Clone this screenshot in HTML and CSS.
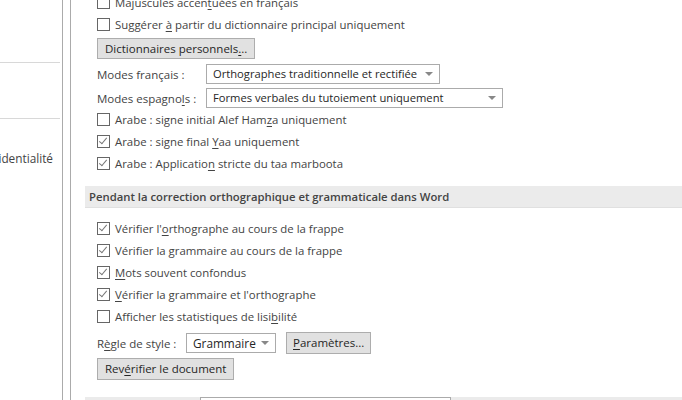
FILE: index.html
```html
<!DOCTYPE html>
<html lang="fr">
<head>
<meta charset="utf-8">
<link rel="stylesheet" href="styles.css">
</head>
<body>
<div class="window">
  <nav class="sidebar">
    <div class="nav-item"></div>
    <div class="nav-item"></div>
    <div class="nav-item last"><span class="nav-text">Centre de gestion de la confidentialité</span></div>
  </nav>
  <div class="gutter"></div>
  <main class="content">
    <div class="group top">
      <label class="row"><span class="cb"></span><span>Majuscules accen<u>t</u>uées en français</span></label>
      <label class="row"><span class="cb"></span><span>Suggérer <u>à</u> partir du dictionnaire principal uniquement</span></label>
      <button class="btn dict">Dictionnaires personnels<u>.</u>..</button>
      <div class="field fr"><span class="field-label">Modes français :</span><span class="select w-fr">Orthographes traditionnelle et rectifiée<i class="arrow"></i></span></div>
      <div class="field es"><span class="field-label">Modes espagno<u>l</u>s :</span><span class="select w-es">Formes verbales du tutoiement uniquement<i class="arrow"></i></span></div>
      <label class="row"><span class="cb"></span><span>Arabe : signe initial Alef Ham<u>z</u>a uniquement</span></label>
      <label class="row"><span class="cb on"></span><span>Arabe : signe final <u>Y</u>aa uniquement</span></label>
      <label class="row"><span class="cb on"></span><span>Arabe : Applicatio<u>n</u> stricte du taa marboota</span></label>
    </div>
    <h2 class="section">Pendant la correction orthographique et grammaticale dans Word</h2>
    <div class="group">
      <label class="row"><span class="cb on"></span><span>Vérifier l'<u>o</u>rthographe au cours de la frappe</span></label>
      <label class="row"><span class="cb on"></span><span>Vérifier la <u>g</u>rammaire au cours de la frappe</span></label>
      <label class="row"><span class="cb on"></span><span><u>M</u>ots souvent confondus</span></label>
      <label class="row"><span class="cb on"></span><span><u>V</u>érifier la grammaire et l'orthographe</span></label>
      <label class="row"><span class="cb"></span><span>Afficher les statistiques de lisi<u>b</u>ilité</span></label>
      <div class="field style"><span class="field-label">R<u>è</u>gle de style :</span><span class="select w-st">Grammaire<i class="arrow"></i></span><button class="btn params"><u>P</u>aramètres...</button></div>
      <button class="btn recheck">Rev<u>é</u>rifier le document</button>
    </div>
    <div class="section next"><span class="select w-doc"></span></div>
  </main>
</div>
</body>
</html>
```
FILE: styles.css
```css
html, body {
  margin: 0;
  padding: 0;
  background: #fff;
}
body {
  width: 682px;
  height: 400px;
  overflow: hidden;
  font-family: "Open Sans", "Noto Sans", sans-serif;
  font-size: 11.5px;
  color: #444;
}
u { text-decoration-thickness: 1px; text-underline-offset: 2px; }
.window {
  display: flex;
  height: 400px;
}
.sidebar {
  width: 62px;
  flex: none;
  border-right: 1px solid #ababab;
}
.nav-item {
  height: 55px;
  border-bottom: 1px solid #d8d8d8;
  margin-right: 2px;
}
.nav-item:first-child { height: 62px; }
.nav-item.last {
  border-bottom: none;
  display: flex;
  justify-content: flex-end;
  overflow: hidden;
  padding-top: 31px;
  padding-right: 7px;
  height: auto;
  white-space: nowrap;
  font-size: 11.8px;
}
.gutter {
  width: 7px;
  flex: none;
  border-right: 1px solid #ababab;
}
.content {
  flex: 1;
  padding-left: 14px;
  margin-top: -9px;
  min-width: 0;
}
.group {
  padding-left: 12px;
  display: flex;
  flex-direction: column;
  align-items: flex-start;
}
.row {
  height: 22px;
  display: flex;
  align-items: center;
  gap: 5px;
  white-space: nowrap;
  font-size: 11.4px;
}
.cb {
  width: 11px;
  height: 11px;
  border: 1px solid #666;
  background: #fff;
  flex: none;
  position: relative;
}
.cb.on::after {
  content: "";
  position: absolute;
  left: 3px;
  top: 0px;
  width: 3px;
  height: 7px;
  border: solid #777;
  border-width: 0 1.5px 1.5px 0;
  transform: rotate(40deg);
}
.btn {
  font: inherit;
  font-size: 11.5px;
  color: #262626;
  background: #e1e1e1;
  border: 1px solid #adadad;
  height: 22px;
  padding: 0 7px;
  line-height: 18px;
}
.dict { margin-top: 3px; height: 21px; }
.field {
  display: flex;
  align-items: center;
  height: 20px;
  white-space: nowrap;
}
.field.fr { margin-top: 5px; }
.field.es { margin-top: 4px; }
.field-label { width: 109px; flex: none; }
.select {
  position: relative;
  box-sizing: border-box;
  height: 20px;
  border: 1px solid #ababab;
  background: #fff;
  padding: 0 6px;
  line-height: 18px;
  color: #262626;
  font-size: 11.2px;
}
.arrow {
  position: absolute;
  right: 6px;
  top: 7px;
  width: 0;
  height: 0;
  border-left: 4px solid transparent;
  border-right: 4px solid transparent;
  border-top: 4px solid #888;
}
.w-fr { width: 234px; }
.w-es { width: 297px; }
.section {
  margin: 12px 0 9px;
  height: 22px;
  box-sizing: border-box;
  background: #ebebeb;
  border-bottom: 1px solid #e0e0e0;
  font-size: 11.3px;
  font-weight: 600;
  line-height: 22px;
  padding-left: 4px;
  color: #444;
}
.field.style { margin-top: 5px; height: 22px; }
.field.style .field-label { width: 89px; }
.w-st { width: 90px; font-size: 11.8px; }
.params { margin-left: 10px; padding: 0 6px; }
.recheck { margin-top: 4px; }
.section.next {
  margin-top: 17px;
  padding-left: 115px;
}
.w-doc {
  display: block;
  width: 251px;
  height: 20px;
}
```
